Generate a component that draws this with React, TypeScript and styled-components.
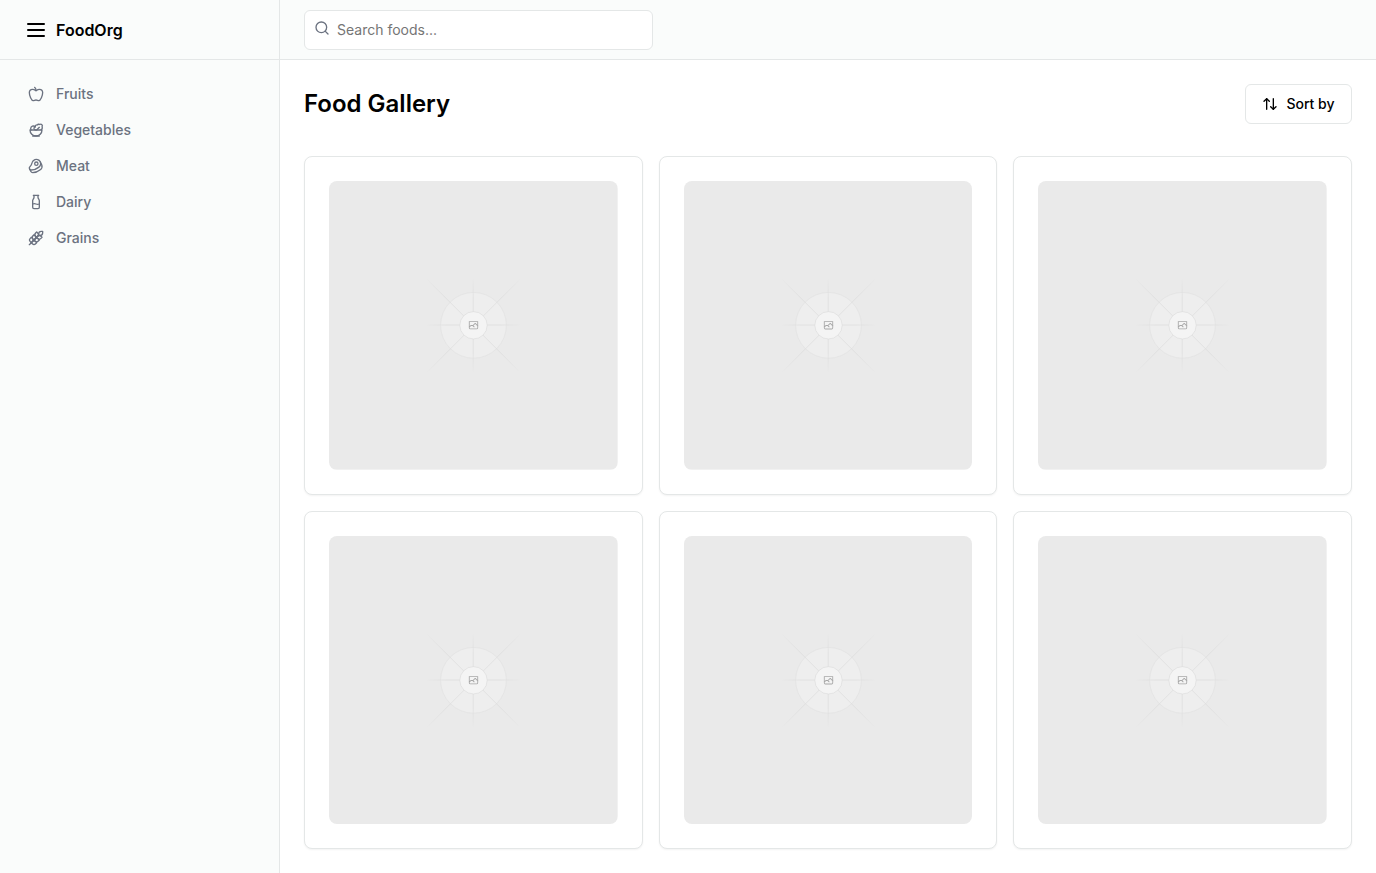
import React from "react";
import styled, { createGlobalStyle } from "styled-components";
import { ArrowUpDown, Beef, Milk, Salad, Search, Wheat } from "lucide-react";

const GlobalStyle = createGlobalStyle`
  *, *::before, *::after { box-sizing: border-box; }
  body {
    margin: 0;
    background: #ffffff;
    color: #000000;
    font-family: Inter, "Liberation Sans", sans-serif;
    font-size: 16px;
    line-height: 24px;
  }
`;

const Shell = styled.div`
  display: grid;
  grid-template-columns: 280px minmax(0, 1fr);
  min-height: 100vh;
`;

const Sidebar = styled.aside`
  display: flex;
  flex-direction: column;
  gap: 16px;
  background: #fafcfb;
  border-right: 1px solid #e4e7e7;
`;

const Brand = styled.div`
  display: flex;
  align-items: center;
  height: 60px;
  padding: 0 24px;
  border-bottom: 1px solid #e4e7e7;
`;

const BrandLink = styled.a`
  display: flex;
  align-items: center;
  gap: 8px;
  color: #000000;
  font-weight: 600;
  text-decoration: none;
`;

const LineIcon = styled.svg.attrs({
  viewBox: "0 0 24 24",
  fill: "none",
  stroke: "currentColor",
  strokeWidth: 2,
  strokeLinecap: "round",
  strokeLinejoin: "round",
  "aria-hidden": true,
})``;

const Nav = styled.nav`
  display: grid;
  padding: 0 16px;
  font-size: 14px;
  line-height: 20px;
  font-weight: 500;
`;

const NavLink = styled.a`
  display: flex;
  align-items: center;
  gap: 12px;
  padding: 8px 12px;
  border-radius: 8px;
  color: #6b7280;
  text-decoration: none;

  &:hover { color: #000000; }
`;

const Content = styled.div`
  display: flex;
  flex-direction: column;
`;

const TopBar = styled.header`
  display: flex;
  align-items: center;
  height: 60px;
  padding: 0 24px;
  background: #fafcfb;
  border-bottom: 1px solid #e4e7e7;
`;

const SearchForm = styled.form`
  flex: 1;
`;

const SearchBox = styled.label`
  position: relative;
  display: block;
  width: calc(100% / 3);
  color: #6b7280;
`;

const SearchIcon = styled(Search)`
  position: absolute;
  left: 10px;
  top: 10px;
`;

const SearchInput = styled.input`
  display: block;
  width: 100%;
  height: 40px;
  padding: 8px 12px 8px 32px;
  border: 1px solid #e4e7e7;
  border-radius: 6px;
  background: #ffffff;
  color: #000000;
  font: inherit;
  font-size: 14px;
  line-height: 20px;

  &::placeholder { color: #757575; opacity: 1; }
`;

const Main = styled.main`
  display: flex;
  flex-direction: column;
  gap: 32px;
  padding: 24px;
`;

const TitleRow = styled.div`
  display: flex;
  align-items: center;
  justify-content: space-between;
`;

const Title = styled.h1`
  margin: 0;
  font-size: 24px;
  line-height: 32px;
  font-weight: 600;
`;

const SortButton = styled.button`
  display: inline-flex;
  align-items: center;
  justify-content: center;
  gap: 8px;
  min-width: 107px;
  height: 40px;
  padding: 0 16px;
  border: 1px solid #e4e7e7;
  border-radius: 6px;
  background: #ffffff;
  color: #000000;
  font: inherit;
  font-size: 14px;
  line-height: 20px;
  font-weight: 500;
`;

const Gallery = styled.div`
  display: grid;
  grid-template-columns: repeat(3, minmax(0, 1fr));
  gap: 16px;
`;

const Card = styled.article`
  padding: 24px;
  border: 1px solid #e4e7e7;
  border-radius: 8px;
  background: #ffffff;
  box-shadow: 0 1px 2px rgba(0, 0, 0, 0.05);
`;

const Picture = styled.svg`
  display: block;
  width: 100%;
  aspect-ratio: 1;
  border-radius: 8px;
`;

function MenuIcon() {
  return (
    <LineIcon width={24} height={24}>
      <path d="M4 6h16M4 12h16M4 18h16" />
    </LineIcon>
  );
}

function AppleIcon({ size }: { size?: number }) {
  return (
    <LineIcon width={size} height={size}>
      <path d="M12 20.94c1.5 0 2.75 1.06 4 1.06 3 0 6-8 6-12.22A4.91 4.91 0 0 0 17 5c-2.22 0-4 1.44-5 2-1-.56-2.78-2-5-2a4.9 4.9 0 0 0-5 4.78C2 14 5 22 8 22c1.25 0 2.5-1.06 4-1.06Z" />
      <path d="M10 2c1 .5 2 2 2 5" />
    </LineIcon>
  );
}

const categories = [
  { name: "Fruits", Icon: AppleIcon },
  { name: "Vegetables", Icon: Salad },
  { name: "Meat", Icon: Beef },
  { name: "Dairy", Icon: Milk },
  { name: "Grains", Icon: Wheat },
];

const foods = [1, 2, 3, 4, 5, 6];

const rays = [
  { x1: 406, y1: 796.6, x2: 797.4, y2: 405.2 },
  { x1: 404.8, y1: 598.7, x2: 796.6, y2: 598.7 },
  { x1: 599.5, y1: 795.7, x2: 599.5, y2: 404 },
  { x1: 795.7, y1: 796.6, x2: 404.3, y2: 405.2 },
];

function Placeholder({ id }: { id: number }) {
  return (
    <Picture viewBox="0 0 1200 1200" fill="none" role="img" aria-label={`Food ${id}`}>
      <defs>
        {rays.map((ray, i) => (
          <linearGradient key={i} id={`ray-${id}-${i}`} gradientUnits="userSpaceOnUse" {...ray}>
            <stop stopColor="#C9C9C9" stopOpacity="0" />
            <stop offset=".208" stopColor="#C9C9C9" />
            <stop offset=".792" stopColor="#C9C9C9" />
            <stop offset="1" stopColor="#C9C9C9" stopOpacity="0" />
          </linearGradient>
        ))}
      </defs>
      <rect width="1200" height="1200" fill="#EAEAEA" />
      <g opacity=".5">
        <circle cx="600.7" cy="599.9" r="136.6" fill="#FAFAFA" stroke="#C9C9C9" strokeWidth="2.4" opacity=".5" />
        {rays.map((ray, i) => (
          <line key={i} {...ray} stroke={`url(#ray-${id}-${i})`} strokeWidth="2.4" />
        ))}
        <circle cx="600.7" cy="599.9" r="56.8" fill="#fff" stroke="#C9C9C9" strokeWidth="2.4" />
        <path
          fill="#666"
          fillRule="evenodd"
          clipRule="evenodd"
          d="M616.426 586.58h-31.434v16.176l3.553-3.554.531-.531h9.068l.074-.074 8.463-8.463h2.565l7.18 7.181V586.58Zm-15.715 14.654 3.698 3.699 1.283 1.282-2.565 2.565-1.282-1.283-5.2-5.199h-6.066l-5.514 5.514-.073.073v2.876a2.418 2.418 0 0 0 2.418 2.418h26.598a2.418 2.418 0 0 0 2.418-2.418v-8.317l-8.463-8.463-7.181 7.181-.071.072Zm-19.347 5.442v4.085a6.045 6.045 0 0 0 6.046 6.045h26.598a6.044 6.044 0 0 0 6.045-6.045v-7.108l1.356-1.355-1.282-1.283-.074-.073v-17.989h-38.689v23.43l-.146.146.146.147Z"
        />
      </g>
    </Picture>
  );
}

export default function App() {
  return (
    <>
      <GlobalStyle />
      <Shell>
        <Sidebar>
          <Brand>
            <BrandLink href="#">
              <MenuIcon />
              FoodOrg
            </BrandLink>
          </Brand>
          <Nav aria-label="Categories">
            {categories.map(({ name, Icon }) => (
              <NavLink key={name} href={`#${name.toLowerCase()}`}>
                <Icon size={16} />
                {name}
              </NavLink>
            ))}
          </Nav>
        </Sidebar>
        <Content>
          <TopBar>
            <SearchForm role="search">
              <SearchBox>
                <SearchIcon size={16} />
                <SearchInput type="search" placeholder="Search foods..." aria-label="Search foods" />
              </SearchBox>
            </SearchForm>
          </TopBar>
          <Main>
            <TitleRow>
              <Title>Food Gallery</Title>
              <SortButton type="button">
                <ArrowUpDown size={16} />
                Sort by
              </SortButton>
            </TitleRow>
            <Gallery>
              {foods.map((id) => (
                <Card key={id}>
                  <Placeholder id={id} />
                </Card>
              ))}
            </Gallery>
          </Main>
        </Content>
      </Shell>
    </>
  );
}
